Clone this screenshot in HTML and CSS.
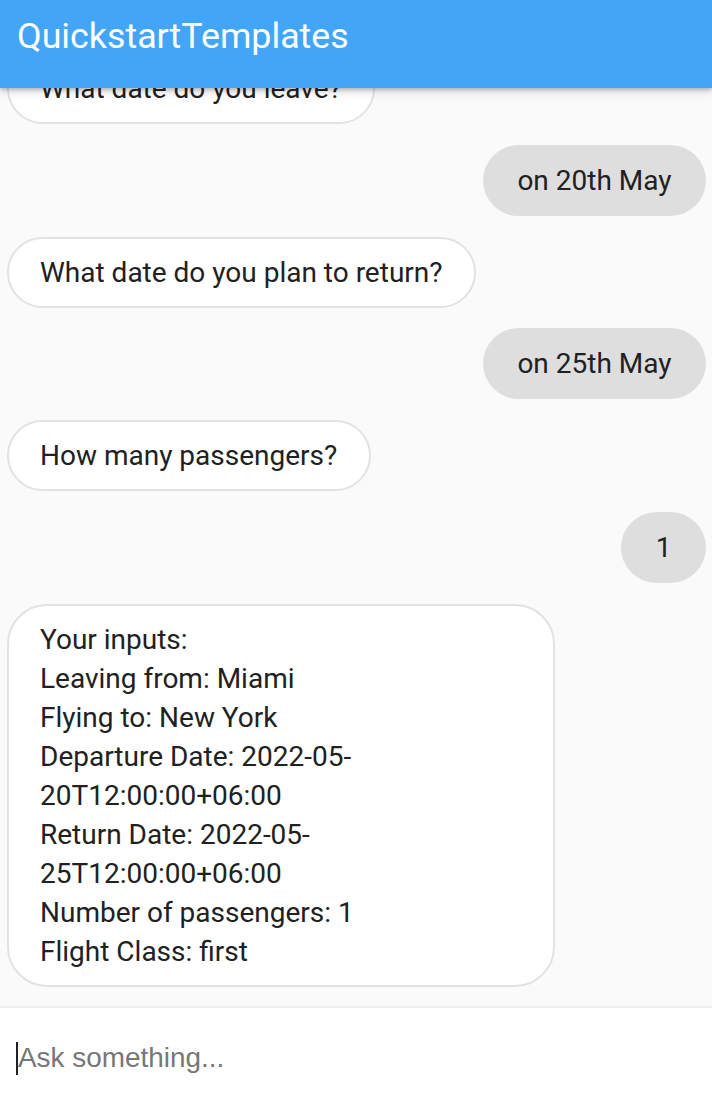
FILE: index.html
```html
<!DOCTYPE html>
<html>
<head>
<meta charset="utf-8">
<link rel="stylesheet" href="styles.css">
</head>
<body>
<div class="app">
  <header class="appbar">
    <h1 class="title">QuickstartTemplates</h1>
  </header>
  <main class="chat">
    <div class="msg bot">What date do you leave?</div>
    <div class="msg user">on 20th May</div>
    <div class="msg bot">What date do you plan to return?</div>
    <div class="msg user">on 25th May</div>
    <div class="msg bot">How many passengers?</div>
    <div class="msg user">1</div>
    <div class="msg bot block">Your inputs:<br>Leaving from: Miami<br>Flying to: New York<br>Departure Date: 2022-05-<br>20T12:00:00+06:00<br>Return Date: 2022-05-<br>25T12:00:00+06:00<br>Number of passengers: 1<br>Flight Class: first</div>
  </main>
  <footer class="composer">
    <span class="caret"></span><span class="placeholder">Ask something...</span>
  </footer>
</div>
</body>
</html>
```

FILE: styles.css
```css
* { box-sizing: border-box; }
html, body { margin: 0; padding: 0; }
body {
  width: 712px;
  height: 1098px;
  overflow: hidden;
  font-family: Roboto, "Noto Sans", sans-serif;
  background: #fafafa;
}
.app {
  display: flex;
  flex-direction: column;
  height: 1098px;
}
.appbar {
  height: 88px;
  flex: 0 0 88px;
  background: #42a5f5;
  box-shadow: 0 2px 4px rgba(0,0,0,0.22), 0 4px 10px rgba(0,0,0,0.12);
  position: relative;
  z-index: 2;
  display: flex;
  align-items: flex-start;
  padding: 16px 17px 0;
}
.title {
  margin: 0;
  font-weight: 400;
  font-size: 35.8px;
  line-height: 40px;
  color: #ffffff;
}
.chat {
  flex: 1 1 auto;
  overflow: hidden;
  display: flex;
  flex-direction: column;
  justify-content: flex-end;
  gap: 20.7px;
  padding: 0 6px 19.5px 7px;
  background: #fafafa;
}
.msg {
  font-size: 28px;
  line-height: 39px;
  color: #212121;
  padding: 16px 34.5px;
  border-radius: 36px;
  flex: 0 0 auto;
}
.bot {
  align-self: flex-start;
  background: #ffffff;
  border: 2px solid #e2e2e2;
  padding: 14px 31.5px 14px 31px;
}
.user {
  align-self: flex-end;
  background: #dedede;
}
.block {
  width: 548px;
  border-radius: 40px;
}
.composer {
  flex: 0 0 92px;
  height: 92px;
  background: #ffffff;
  border-top: 2px solid #eeeeee;
  display: flex;
  align-items: center;
  padding: 0 16px;
}
.caret {
  width: 2px;
  height: 33px;
  background: #222;
  margin-top: 10px;
}
.placeholder {
  font-family: "Liberation Sans", Arial, sans-serif;
  font-size: 27.9px;
  color: #777777;
  margin-top: 10px;
}
```
